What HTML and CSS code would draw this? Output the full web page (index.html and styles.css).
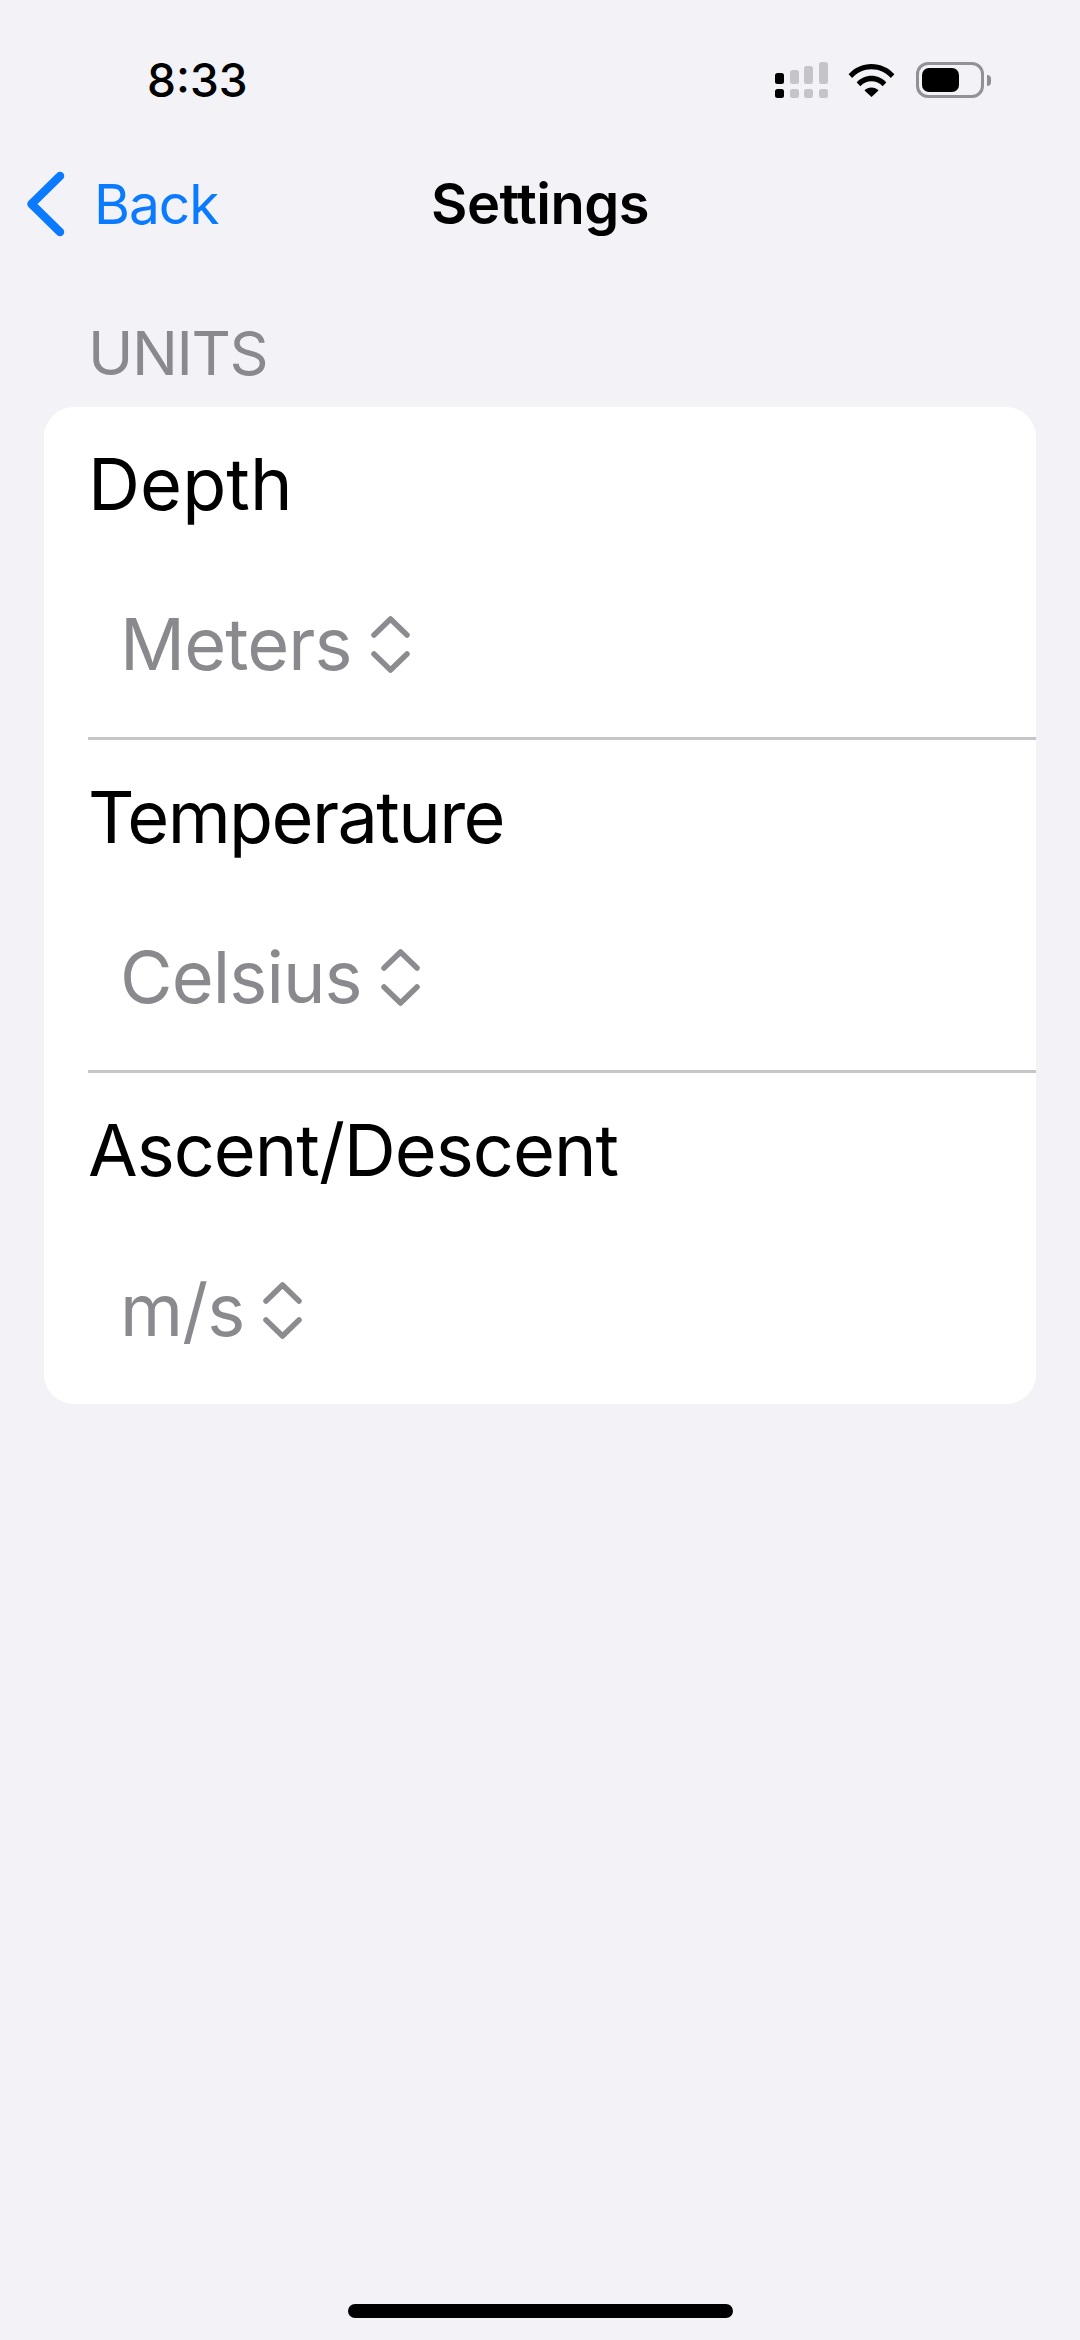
FILE: index.html
```html
<!DOCTYPE html>
<html lang="en">
<head>
<meta charset="utf-8">
<title>Settings</title>
<link rel="stylesheet" href="styles.css">
</head>
<body>
<div class="page">
  <header class="status">
    <span class="time">8:33</span>
    <div class="status-icons">
      <svg class="signal" width="53" height="36" viewBox="0 0 53 36">
        <g fill="#000"><rect x="0" y="11" width="9" height="11" rx="2.5"/><rect x="0" y="27" width="9" height="9" rx="2.5"/></g>
        <g fill="#c4c4c9"><rect x="15" y="8" width="9" height="14" rx="2.5"/><rect x="15" y="27" width="9" height="9" rx="2.5"/><rect x="29" y="4" width="9" height="18" rx="2.5"/><rect x="29" y="27" width="9" height="9" rx="2.5"/><rect x="44" y="0" width="9" height="22" rx="2.5"/><rect x="44" y="27" width="9" height="9" rx="2.5"/></g>
      </svg>
      <svg class="wifi" width="47" height="34" viewBox="0 0 47 34">
        <path d="M0.6 11.2C6.6 4.7 14.6 1 23.5 1s16.9 3.7 22.9 10.2l-3.6 3.8C37.800 9.500 31 6.300 23.500 6.300S9.200 9.500 4.200 15z" fill="#000"/>
        <path d="M8.700 19.400C12.600 15.200 17.800 12.800 23.500 12.800s10.900 2.400 14.800 6.600l-3.700 3.800c-2.900-3-6.800-4.900-11.100-4.900s-8.200 1.900-11.100 4.900z" fill="#000"/>
        <path d="M16.500 27.400c1.800-1.800 4.300-3 7-3s5.200 1.200 7 3l-7 6.600z" fill="#000"/>
      </svg>
      <div class="battery">
        <div class="battery-shell"><div class="battery-level"></div></div>
        <div class="battery-nub"></div>
      </div>
    </div>
  </header>

  <nav class="navbar">
    <div class="back">
      <svg class="back-chevron" width="40" height="66" viewBox="0 0 40 66">
        <path d="M35 5 6.500 33 35 61" fill="none" stroke="#0a7aff" stroke-width="8.500" stroke-linecap="round" stroke-linejoin="round"/>
      </svg>
      <span class="back-label">Back</span>
    </div>
    <h1 class="nav-title">Settings</h1>
  </nav>

  <main class="content">
    <h2 class="section-label">UNITS</h2>
    <section class="card">
      <div class="row">
        <div class="row-title row-title--loose">Depth</div>
        <div class="picker"><span>Meters</span>
          <svg class="updown" width="39" height="57" viewBox="0 0 39 57"><path d="M3 19 19.500 3 36 19M3 38l16.500 16L36 38" fill="none" stroke="#8b8b90" stroke-width="5.500" stroke-linecap="round" stroke-linejoin="round"/></svg>
        </div>
      </div>
      <div class="row">
        <div class="row-title row-title--tight">Temperature</div>
        <div class="picker"><span>Celsius</span>
          <svg class="updown" width="39" height="57" viewBox="0 0 39 57"><path d="M3 19 19.500 3 36 19M3 38l16.500 16L36 38" fill="none" stroke="#8b8b90" stroke-width="5.500" stroke-linecap="round" stroke-linejoin="round"/></svg>
        </div>
      </div>
      <div class="row">
        <div class="row-title">Ascent/Descent</div>
        <div class="picker"><span>m/s</span>
          <svg class="updown" width="39" height="57" viewBox="0 0 39 57"><path d="M3 19 19.500 3 36 19M3 38l16.500 16L36 38" fill="none" stroke="#8b8b90" stroke-width="5.500" stroke-linecap="round" stroke-linejoin="round"/></svg>
        </div>
      </div>
    </section>
  </main>

  <div class="home-indicator"></div>
</div>
</body>
</html>
```

FILE: styles.css
```css
* { box-sizing: border-box; margin: 0; padding: 0; }
html, body { width: 1080px; height: 2340px; overflow: hidden; }
body { background: #f2f2f7; font-family: Inter, "Liberation Sans", sans-serif; color: #000; }
.page { display: flex; flex-direction: column; height: 2340px; }

.status { display: flex; justify-content: space-between; align-items: center; height: 115px; padding: 45px 89px 0 147px; }
.time { font-size: 46px; font-weight: 500; line-height: 50px; }
.status-icons { display: flex; align-items: center; gap: 20px; }
.battery { display: flex; align-items: center; gap: 3px; margin-left: 1px; }
.battery-shell { width: 68px; height: 36px; border: 3px solid #929296; border-radius: 12px; padding: 3px 0 3px 3px; }
.battery-level { width: 37px; height: 24px; background: #000; border-radius: 7px; }
.battery-nub { width: 4px; height: 11px; background: #8e8e92; border-radius: 0 6px 6px 0; }

.navbar { position: relative; display: flex; align-items: center; justify-content: center; height: 170px; padding-top: 8px; }
.back { position: absolute; left: 25px; top: 0; height: 100%; display: flex; align-items: center; gap: 29px; padding-top: 8px; }
.back-chevron { display: block; }
.back-label { font-size: 55px; color: #0a7aff; letter-spacing: -1px; }
.nav-title { font-size: 56px; font-weight: 600; letter-spacing: -0.5px; }

.content { padding: 16px 44px 0; }
.section-label { font-size: 61px; font-weight: 400; color: #8a8a8e; line-height: 72px; padding: 16px 0 0 44px; height: 100px; letter-spacing: -1.4px; }
.card { background: #fff; border-radius: 30px; height: 997px; display: flex; flex-direction: column; padding-left: 44px; margin-top: 6px; }
.row { height: 333px; display: flex; flex-direction: column; }
.row:first-child { height: 330px; }
.row:last-child { flex: 1; }
.row + .row { border-top: 3px solid #c6c6c8; }
.row-title { font-size: 72px; line-height: 84px; margin-top: 35px; letter-spacing: -1px; }
.row-title--loose { letter-spacing: 0.1px; }
.row-title--tight { letter-spacing: -1.6px; }
.picker { display: flex; align-items: center; gap: 19px; font-size: 72px; line-height: 84px; color: #8a8a8e; padding-left: 32px; margin-top: 76px; letter-spacing: -0.9px; }
.updown { display: block; }

.home-indicator { width: 385px; height: 14px; border-radius: 7px; background: #000; margin: auto auto 22px; }
```
